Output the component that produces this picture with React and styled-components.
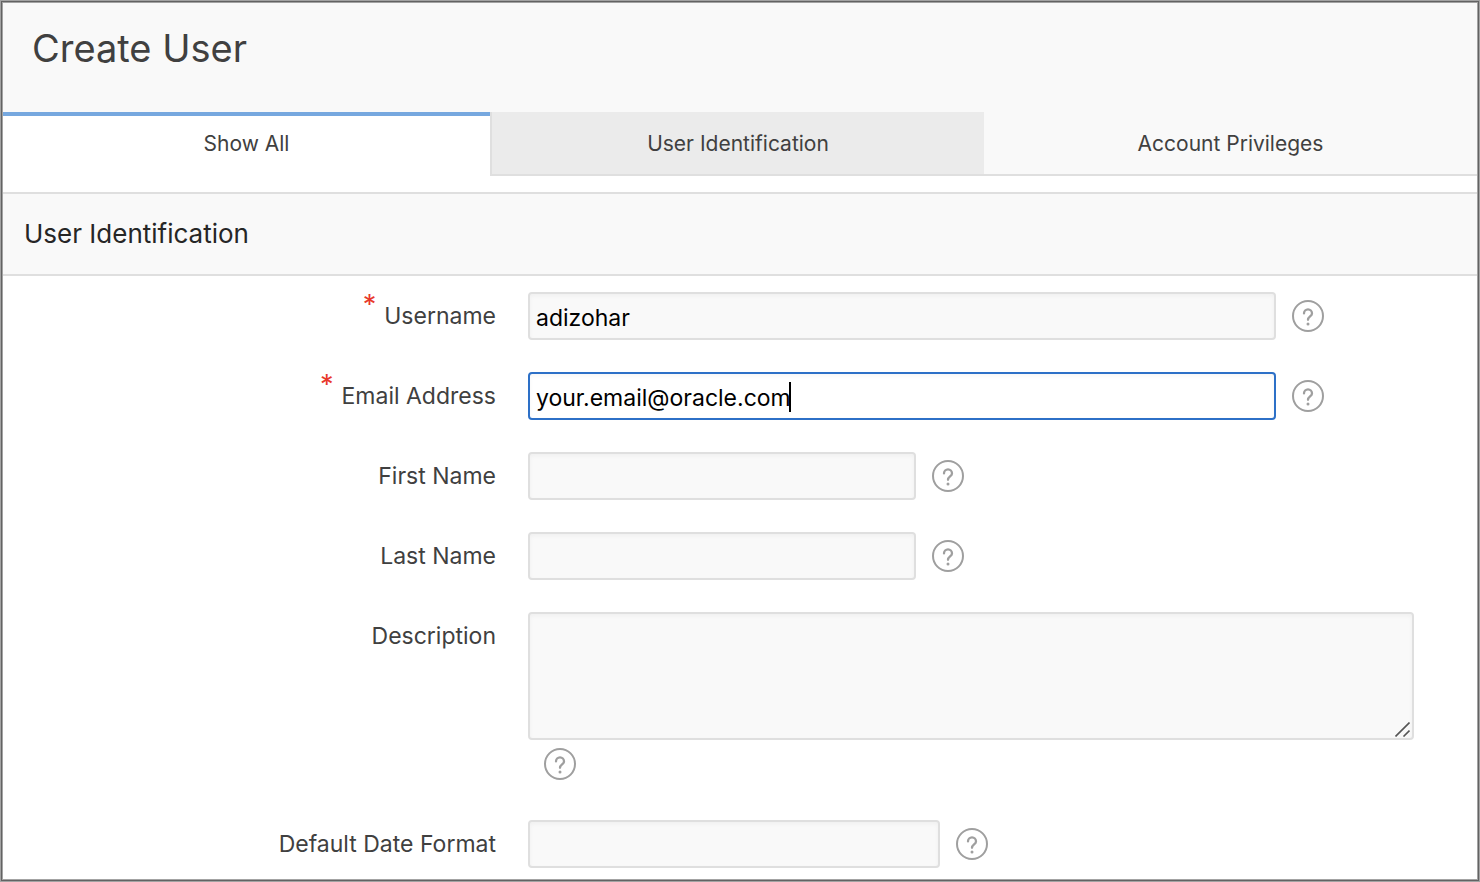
import React, { useState } from "react";
import styled, { createGlobalStyle } from "styled-components";

const GlobalStyle = createGlobalStyle`
  *, *::before, *::after { box-sizing: border-box; }
  body {
    margin: 0;
    background: #fff;
    color: #404040;
    font-family: Inter, "Liberation Sans", sans-serif;
  }
`;

const Page = styled.main`
  min-height: 100vh;
  border: 3px solid #a3a3a3;
  outline: 1px solid #636363;
  outline-offset: -2px;
  background: #fff;
`;

const Header = styled.header`
  height: 109px;
  padding: 21px 29px;
  background: #f9f9f9;
`;

const Title = styled.h1`
  margin: 0;
  font-size: 38px;
  line-height: 48px;
  font-weight: 400;
`;

const Tabs = styled.nav`
  display: grid;
  grid-template-columns: 487fr 494fr 493fr;
  margin-bottom: 16px;
`;

const Tab = styled.button`
  height: 64px;
  padding: 2px 0 0;
  border: 0 solid #dfdfdf;
  border-bottom-width: 2px;
  background: ${(p) => (p.$hover ? "#ebebeb" : "#f9f9f9")};
  color: inherit;
  font: inherit;
  font-size: 21px;
  line-height: 32px;
  cursor: pointer;

  &[aria-selected="true"] {
    border-bottom-color: #fff;
    background: #fff;
    box-shadow: inset 0 4px #76a8df;
  }
  &[aria-selected="true"] + & {
    border-left-width: 2px;
  }
`;

const SectionHeader = styled.div`
  padding: 20px 21px;
  border: solid #dfdfdf;
  border-width: 2px 0;
  background: #f9f9f9;
`;

const SectionTitle = styled.h2`
  margin: 0;
  color: #262626;
  font-size: 26px;
  line-height: 40px;
  font-weight: 400;
`;

const Form = styled.form`
  display: flex;
  flex-direction: column;
  gap: 32px;
  padding: 16px 63px 10px 0;
`;

const Row = styled.div`
  display: grid;
  grid-template-columns: minmax(0, 493px) minmax(0, 1fr);
  column-gap: 32px;
`;

const Label = styled.label`
  display: flex;
  justify-content: flex-end;
  gap: 8px;
  font-size: 23px;
  line-height: 48px;
`;

const Required = styled.span`
  color: #e8382c;
  font-size: 27px;
  line-height: 26px;
`;

const Controls = styled.div`
  display: flex;
  flex-direction: ${(p) => (p.$stacked ? "column" : "row")};
  align-items: ${(p) => (p.$stacked ? "flex-start" : "center")};
  gap: ${(p) => (p.$stacked ? 8 : 16)}px;
  padding-bottom: ${(p) => (p.$stacked ? 8 : 0)}px;
`;

const Field = styled.div`
  position: relative;
  flex: 0 1 ${(p) => p.$width}px;
`;

const Input = styled.input`
  display: block;
  width: 100%;
  height: 48px;
  padding: 4px 6px 0;
  border: 2px solid ${(p) => (p.$active ? "#2d70c7" : "#dfdfdf")};
  border-radius: 4px;
  outline: none;
  background: ${(p) => (p.$active ? "#fff" : "#f9f9f9")};
  box-shadow: inset 0 2px 4px rgba(0, 0, 0, 0.04);
  color: #000;
  font: inherit;
  font-size: 23px;
`;

const Caret = styled.span`
  position: absolute;
  top: 10px;
  left: 261px;
  width: 2px;
  height: 30px;
  background: #000;
`;

const AreaBox = styled.div`
  position: relative;
  width: 100%;
`;

const TextArea = styled.textarea`
  display: block;
  width: 100%;
  height: 128px;
  padding: 6px;
  border: 2px solid #dfdfdf;
  border-radius: 4px;
  outline: none;
  resize: none;
  background: #f9f9f9;
  box-shadow: inset 0 2px 4px rgba(0, 0, 0, 0.04);
  font: inherit;
  font-size: 23px;
`;

const Grip = styled.svg`
  position: absolute;
  right: 4px;
  bottom: 3px;
  pointer-events: none;
`;

const HelpButton = styled.button`
  flex: none;
  width: 32px;
  height: 32px;
  padding: 0;
  margin-left: ${(p) => (p.$indent ? 16 : 0)}px;
  border: 0;
  background: none;
  color: #9f9f9f;
  cursor: pointer;

  svg { display: block; }
`;

function Help({ label, indent }) {
  return (
    <HelpButton type="button" aria-label={`Help for ${label}`} $indent={indent}>
      <svg width="32" height="32" viewBox="0 0 32 32" fill="none" stroke="currentColor">
        <circle cx="16" cy="16" r="15" strokeWidth="2" />
        <path d="M12 13.4a4 4 0 0 1 8 0c0 2.9-4 3.2-4 6.4" strokeWidth="2.3" strokeLinecap="round" />
        <circle cx="16" cy="24" r="1.5" fill="currentColor" stroke="none" />
      </svg>
    </HelpButton>
  );
}

function TextField({ id, label, width, required, active, initial = "" }) {
  const [value, setValue] = useState(initial);
  return (
    <Row>
      <Label htmlFor={id}>
        {required && <Required aria-hidden="true">*</Required>}
        {label}
      </Label>
      <Controls>
        <Field $width={width}>
          <Input
            id={id}
            type="text"
            value={value}
            required={required}
            spellCheck={false}
            $active={active}
            onChange={(e) => setValue(e.target.value)}
          />
          {active && <Caret />}
        </Field>
        <Help label={label} />
      </Controls>
    </Row>
  );
}

const tabs = ["Show All", "User Identification", "Account Privileges"];

export default function App() {
  const [selected, setSelected] = useState(0);
  return (
    <Page>
      <GlobalStyle />
      <Header>
        <Title>Create User</Title>
      </Header>
      <Tabs role="tablist">
        {tabs.map((name, i) => (
          <Tab
            key={name}
            type="button"
            role="tab"
            aria-selected={selected === i}
            $hover={i === 1}
            onClick={() => setSelected(i)}
          >
            {name}
          </Tab>
        ))}
      </Tabs>
      <SectionHeader>
        <SectionTitle>User Identification</SectionTitle>
      </SectionHeader>
      <Form>
        <TextField id="username" label="Username" width={748} required initial="adizohar" />
        <TextField id="email" label="Email Address" width={748} required active initial="your.email@oracle.com" />
        <TextField id="first-name" label="First Name" width={388} />
        <TextField id="last-name" label="Last Name" width={388} />
        <Row>
          <Label htmlFor="description">Description</Label>
          <Controls $stacked>
            <AreaBox>
              <TextArea id="description" />
              <Grip width="15" height="15" viewBox="0 0 15 15" stroke="#555" strokeWidth="1.6" aria-hidden="true">
                <path d="M0.5 14.5 14.5 0.5M8.5 14.5 14.5 8.5" />
              </Grip>
            </AreaBox>
            <Help label="Description" indent />
          </Controls>
        </Row>
        <TextField id="date-format" label="Default Date Format" width={412} />
      </Form>
    </Page>
  );
}
